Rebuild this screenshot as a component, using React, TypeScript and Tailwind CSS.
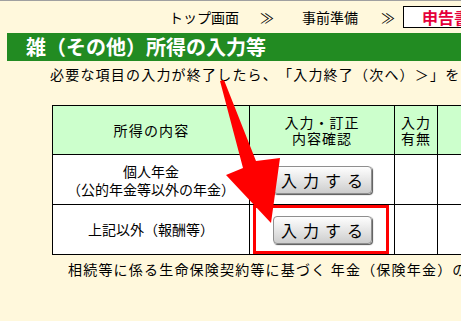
import React from "react";

function Btn() {
  return (
    <div className="w-[99px] h-[28px] rounded-[4px] border border-[#8f8f8f] bg-[linear-gradient(#fefefe,#e6e6e6_50%,#cdcdcd)] shadow-[1px_1px_1px_#555] text-[16px] tracking-[6px] pl-[6px] leading-none flex items-center justify-center text-black">
      入力する
    </div>
  );
}

export default function App() {
  return (
    <div className="w-[461px] h-[321px] overflow-hidden bg-[#fff8dc] relative border-t border-[#a0a0a0] font-['Noto_Sans_CJK_JP',sans-serif] text-black [text-spacing-trim:space-all]">
      {/* breadcrumb */}
      <div className="flex items-center h-[32px] pl-[169px] whitespace-nowrap text-[14px]">
        <span className="shrink-0">トップ画面</span>
        <span className="shrink-0 ml-[21px]">≫</span>
        <span className="shrink-0 ml-[28px]">事前準備</span>
        <span className="shrink-0 ml-[23px]">≫</span>
        <div className="shrink-0 ml-[8px] h-[22px] border border-black bg-white pl-[18px] pr-[20px] flex items-center text-[16px] font-bold text-[#e5003a]">
          申告書等の作成
        </div>
      </div>

      {/* title bar */}
      <div className="ml-[7px] h-[28px] bg-[#228b22] text-white font-bold text-[20px] leading-[28px] pl-[19px] whitespace-nowrap">
        雑（その他）所得の入力等
      </div>

      {/* instruction */}
      <div className="mt-[3px] pl-[50px] h-[20px] leading-[20px] text-[14px] tracking-[1.2px] whitespace-nowrap">
        必要な項目の入力が終了したら、「入力終了（次へ）＞」をクリックしてください。
      </div>

      {/* table */}
      <div className="ml-[52px] mt-[21px] w-max grid grid-cols-[197px_145px_43px_80px] border-l border-t border-black text-[14px]">
        <div className="h-[49px] bg-[#ccffcc] border-r border-b border-black flex items-center justify-center tracking-[1.2px] pl-[1px]">
          所得の内容
        </div>
        <div className="h-[49px] bg-[#ccffcc] border-r border-b border-black flex flex-col items-center justify-center leading-[16px] tracking-[1px]">
          <span>入力・訂正</span>
          <span>内容確認</span>
        </div>
        <div className="h-[49px] bg-[#ccffcc] border-r border-b border-black flex flex-col items-center justify-center leading-[16px] tracking-[1px]">
          <span>入力</span>
          <span>有無</span>
        </div>
        <div className="h-[49px] bg-[#ccffcc] border-r border-b border-black" />

        <div className="h-[50px] bg-white border-r border-b border-black flex flex-col items-center justify-center leading-[18px]">
          <span>個人年金</span>
          <span>（公的年金等以外の年金）</span>
        </div>
        <div className="h-[50px] bg-white border-r border-b border-black flex items-center justify-center">
          <Btn />
        </div>
        <div className="h-[50px] bg-white border-r border-b border-black" />
        <div className="h-[50px] bg-white border-r border-b border-black" />

        <div className="h-[50px] bg-white border-r border-b border-black flex items-center justify-center">
          上記以外（報酬等）
        </div>
        <div className="h-[50px] bg-white border-r border-b border-black flex items-center justify-center">
          <Btn />
        </div>
        <div className="h-[50px] bg-white border-r border-b border-black" />
        <div className="h-[50px] bg-white border-r border-b border-black" />
      </div>

      {/* note below */}
      <div className="mt-[4px] pl-[68px] h-[20px] leading-[20px] text-[14px] tracking-[1.2px] whitespace-nowrap">
        相続等に係る生命保険契約等に基づく 年金（保険年金）の入力はこちら
      </div>

      {/* annotation: red box */}
      <div className="absolute left-[253px] top-[204px] w-[136px] h-[49px] border-[3px] border-[#ff0000]" />

      {/* annotation: arrow */}
      <svg className="absolute left-0 top-0 pointer-events-none" width="461" height="321" viewBox="0 0 461 321">
        <polygon
          points="220,80 224,79 256,160 280,157 271,222 226,174 243,167"
          fill="#ff0000"
        />
      </svg>
    </div>
  );
}
